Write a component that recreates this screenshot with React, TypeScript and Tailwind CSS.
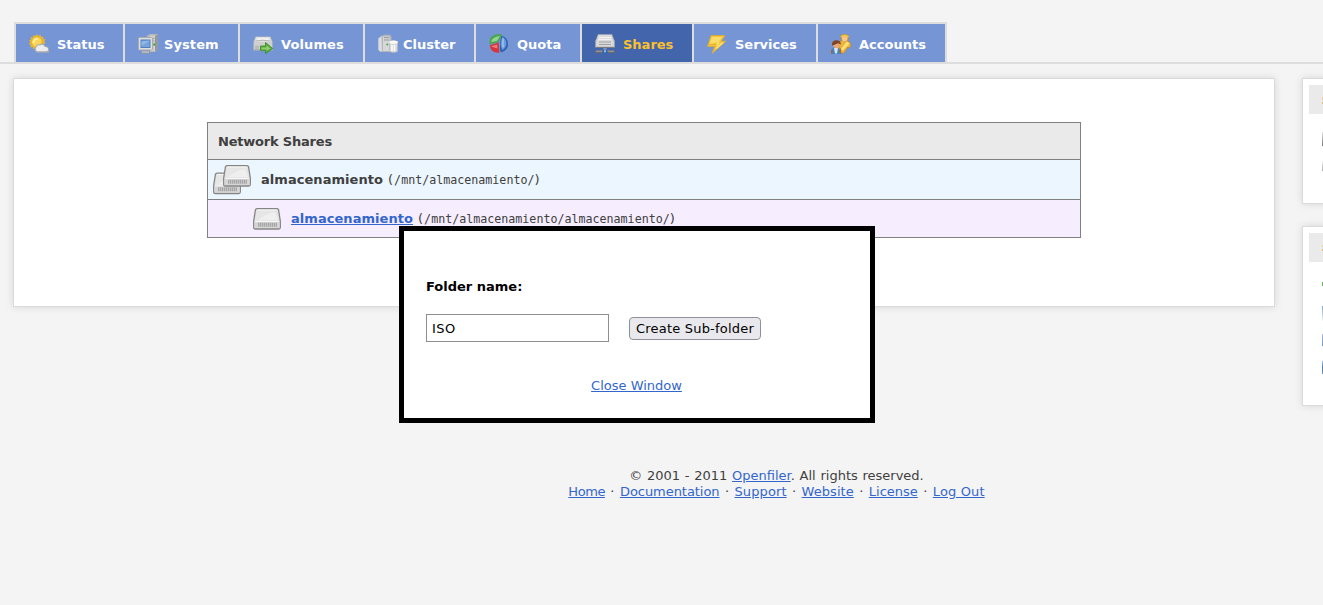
import type { ReactNode } from "react";

function StatusIcon() {
  return (
    <svg width="20" height="20" viewBox="0 0 20 20" className="shrink-0">
      <path d="M8 0l1.300 2L11.500.7l.5 2.300 2.600-.4-.6 2.300 2.500.6-1.400 2 1.500 1.800-2.400.8.5 2.500-2.600-.4-.6 2.300-2.200-1.200L8 16l-1.500-2-2.200 1.300-.5-2.400-2.500.4.6-2.400-2-.9 1.500-2L0 6.300l2.200-.8L1.500 3l2.500.4.5-2.500 2.200 1.200z" fill="#e8b72f" />
      <circle cx="7.800" cy="8" r="5.300" fill="#fbd65a" stroke="#eda91c" strokeWidth=".8" />
      <path d="M4.500 9a3.800 3.800 0 0 1 4.500-4" stroke="#fff0a0" strokeWidth="1.800" fill="none" />
      <path d="M8.500 18.700a3.400 3.400 0 0 1-1.700-6 2.800 2.800 0 0 1 3.400-2.200 3.800 3.800 0 0 1 6.200 1.800 3.200 3.200 0 0 1 3.600 3v3.400z" fill="#a7a9ac" />
      <path d="M8 17.200a2.600 2.600 0 0 1-.2-4.400q1-2 3-1.200 3.600-2.200 5 1.500 3.200-.2 3.400 2.600-.3 1.500-2.200 1.500z" fill="#ececed" />
    </svg>
  );
}

function SystemIcon() {
  return (
    <svg width="20" height="20" viewBox="0 0 20 20" className="shrink-0">
      <path d="M9 1.500 12 0h7.500v16L17 18h-5V4H9z" fill="#b5b7ba" />
      <path d="M12 1.500h5V17h-5z" fill="#cfd0d2" />
      <path d="M17 2 19.700.5V16L17 17.500z" fill="#96999c" />
      <path d="M12.500 4.500h4M13.500 7h3" stroke="#9b9da0" />
      <circle cx="16.300" cy="10.500" r="1.200" fill="#48a640" />
      <rect x=".5" y="3.500" width="14" height="12.500" rx="1" fill="#dedede" stroke="#a9abad" />
      <rect x="3" y="6" width="9" height="7.500" fill="#76a3dc" stroke="#4f7fbe" />
      <path d="M3.500 12V7.500l8-1z" fill="#91b8e7" />
      <path d="M5 16.500h5v1h2v2H3v-1.500l2-.5z" fill="#95989a" />
      <path d="M4 18h7" stroke="#d5d6d7" />
    </svg>
  );
}

function VolumesIcon() {
  return (
    <svg width="20" height="20" viewBox="0 0 20 20" className="shrink-0">
      <path d="M2.500 2.500h15L19.700 8v8.500H.3V8z" fill="#b4b7b6" />
      <path d="M3 3h14l2 5.500H1z" fill="#dfe0df" />
      <path d="M4.500 4h11l.8 2H3.500z" fill="#f0f0f0" />
      <path d="M2.500 7q7-1.500 15 0" stroke="#b5b6b5" fill="none" />
      <path d="M1 8.500h18V15H1z" fill="#cfd0cf" />
      <path d="M3 11.500v4M5 11.500v4" stroke="#a4a6a4" />
      <path d="M7.500 12h5V8.500l7.200 6-7.200 5v-3.200h-5z" fill="#5caf38" stroke="#3b8b2a" strokeWidth=".9" />
      <path d="M8.500 13.500h5v-2L17.500 14.500l-4 2.300v-1.300h-5z" fill="#93cc70" />
    </svg>
  );
}

function ClusterIcon() {
  return (
    <svg width="20" height="20" viewBox="0 0 20 20" className="shrink-0">
      <path d="M.3 4.500 4 1.500v16l-1 .5-2.700-2z" fill="#dadcdd" />
      <path d="M3.500 2 6 .7h6L13.500 3v13.500l-2 1.500H4z" fill="#b4b7b9" />
      <path d="M5 2.500h6.500V17H5z" fill="#d6d7d8" />
      <path d="M6 3.700h5M6 6h5" stroke="#94979a" />
      <circle cx="9.300" cy="10.500" r="1" fill="#4ba746" />
      <path d="M11.500 7.500q4-1.500 8 0V17.500q-4 2-8 0z" fill="#d6d8d9" stroke="#b8babc" strokeWidth=".7" />
      <ellipse cx="15.500" cy="8.200" rx="4.200" ry="1.600" fill="#fafafa" />
      <path d="M14 11v6M16.500 11v6" stroke="#fff" strokeWidth="1.500" />
    </svg>
  );
}

function QuotaIcon() {
  return (
    <svg width="20" height="20" viewBox="0 0 20 20" className="shrink-0">
      <path d="M12 1.800q7 1.200 7 8.500 0 5.500-6 8l-2-1V9z" fill="#2e63b1" />
      <path d="M13 3q4.500 1.800 4.300 7-.2 4-4.300 6l-1.500-6z" fill="#6c9bdc" />
      <path d="M14 4.500v9" stroke="#a0c3ee" strokeWidth="1.500" />
      <path d="M.5 9Q0 4.500 3.500 2 8-.8 13 .5L9.500 8 1 10.500z" fill="#4ba74e" />
      <path d="M2 8q1-5 9-6L8 7z" fill="#95d490" />
      <path d="m.7 11.500 9-3.300.7 10.500q-8 1-9.700-7.200z" fill="#d8343b" />
      <path d="m2 12.500 6-2 .5 4z" fill="#f07b78" />
    </svg>
  );
}

function SharesIcon() {
  return (
    <svg width="20" height="20" viewBox="0 0 20 20" className="shrink-0">
      <path d="M3 .3h14L19.700 7v6.500H.3V7z" fill="#b9babb" />
      <path d="M3.500 1h13l1.700 6H1.800z" fill="#dcdcdc" />
      <path d="M1.200 6.500h17.600v6H1.200z" fill="#d9d9d9" />
      <path d="M3.500 5.500h13M4 3.500h12" stroke="#f2f2f2" />
      <path d="M4 8h12M4 10.500h12" stroke="#a0a1a3" />
      <path d="M1 13.500h18" stroke="#777b80" />
      <path d="M10 14v3" stroke="#8299b8" strokeWidth="3" />
      <path d="M.3 17.700h19.400" stroke="#696d70" strokeWidth="3" />
      <path d="M1 17.200h18" stroke="#a3a4a4" />
      <rect x="7.500" y="15.700" width="5" height="4" rx="1.500" fill="#2d65b6" />
      <path d="M9 17.300h2" stroke="#8fc1f4" strokeWidth="2" />
    </svg>
  );
}

function ServicesIcon() {
  return (
    <svg width="20" height="20" viewBox="0 0 20 20" className="shrink-0">
      <path d="M4 1.500h14L14 7.200h5L5 19.500l2.800-7H.5z" fill="#f2c83b" stroke="#d9a83a" strokeWidth=".9" />
      <path d="M5 3h10l-3.500 5-9 2z" fill="#f9dc6a" />
      <path d="M12 7.500 9.500 12M16 8.500l-7 6" stroke="#fce37b" strokeWidth="1.500" />
      <path d="M2 10.500h7l-2 5" stroke="#e9b329" fill="none" />
    </svg>
  );
}

function AccountsIcon() {
  return (
    <svg width="20" height="20" viewBox="0 0 20 20" className="shrink-0">
      <path d="M8 9.500q1-3 3.500-3.500L17 7q3 1 3 5l-2 2-1-1-4 6H8z" fill="#eab53c" stroke="#b98437" strokeWidth=".7" />
      <path d="m9.500 15.500 6.500-8 2.500 2-6.500 7z" fill="#ffdf72" />
      <path d="M9.500 1.500q4-3 8 0V6L14 8l-4-2.500z" fill="#c48a2c" />
      <ellipse cx="13.700" cy="4.500" rx="2.800" ry="3" fill="#f7c889" />
      <path d="M10 3q3.500-3 7.500 0" stroke="#f0c53c" strokeWidth="2" fill="none" />
      <path d="M0 20 1.500 14q4-3 7 1l2 5z" fill="#4384c6" />
      <path d="M3 14h4l-1 5.500H4z" fill="#d8e7f4" />
      <circle cx="5.500" cy="11" r="3.300" fill="#e6a877" />
      <path d="M1 11.500Q.5 6.500 5 6.300t5 4.200L7 9.300l-4 1.700z" fill="#854421" />
      <path d="M.7 15.500v4M9.300 14.500v5" stroke="#a86538" strokeWidth="1.500" />
    </svg>
  );
}

function Drive() {
  return (
    <g>
      <path d="M4 .7h20q1.300 0 1.600 1.300L27.300 13v6.500q0 1.500-1.500 1.500H2.200Q.7 21 .7 19.500V13L2.400 2Q2.700.7 4 .7z" fill="#e2e2e2" stroke="#858583" strokeWidth="1.300" />
      <path d="M4 2h20l2 11.500H2z" fill="#e6e6e6" />
      <path d="M4.500 2h19M1.800 13.500h24.400" stroke="#f6f6f6" />
      <path d="M5 12q7-6 17-8l3 8z" fill="#efefef" />
      <path d="M1.500 14h25v6h-25z" fill="#d6d6d6" />
      <path d="M5 16.700h19" stroke="#a6a6a6" strokeWidth="4" strokeDasharray="1 1" />
      <path d="M5 16.700h19" stroke="#c2c2c2" strokeWidth="4" strokeDasharray="1 1" strokeDashoffset="1" />
    </g>
  );
}

const tabs: { label: string; icon: ReactNode; box: string; text: string }[] = [
  { label: "Status", icon: <StatusIcon />, box: "w-[109px] bg-[#7595d5]", text: "ml-[8px] text-white" },
  { label: "System", icon: <SystemIcon />, box: "w-[115px] bg-[#7595d5]", text: "ml-[6px] tracking-[0.1px] text-white" },
  { label: "Volumes", icon: <VolumesIcon />, box: "w-[125px] bg-[#7595d5]", text: "ml-[8px] tracking-[0.1px] text-white" },
  { label: "Cluster", icon: <ClusterIcon />, box: "w-[111px] bg-[#7595d5]", text: "ml-[5px] text-white" },
  { label: "Quota", icon: <QuotaIcon />, box: "w-[106px] bg-[#7595d5]", text: "ml-[8px] text-white" },
  { label: "Shares", icon: <SharesIcon />, box: "w-[112px] bg-[#4365ac]", text: "ml-[8px] text-[#fbc02d]" },
  { label: "Services", icon: <ServicesIcon />, box: "w-[124px] bg-[#7595d5]", text: "ml-[8px] text-white" },
  { label: "Accounts", icon: <AccountsIcon />, box: "w-[129px] bg-[#7595d5]", text: "ml-[8px] text-white" },
];

const link = "text-[#3366cc] underline";
const footerLinks = [
  { name: "Home", spacing: "tracking-[-0.450px]" },
  { name: "Documentation", spacing: "tracking-[-0.050px]" },
  { name: "Support", spacing: "tracking-[0.100px]" },
  { name: "Website", spacing: "tracking-[0.050px]" },
  { name: "License", spacing: "" },
  { name: "Log Out", spacing: "tracking-[0.130px]" },
];
const panel = "border border-[#dadada] bg-white shadow-[0_0_8px_rgba(0,0,0,0.12)]";
const mono = "font-['DejaVu_Sans_Mono',monospace] text-[11.660px]";

export default function App() {
  return (
    <div className="relative h-[605px] w-[1323px] overflow-hidden bg-[#f4f4f4] font-['DejaVu_Sans',sans-serif] text-[13px] leading-4 text-[#404040]">
      <nav className="flex h-[64px] border-b-2 border-[#dddddd] pt-[22px] pl-[14px]">
        <div className="flex h-[40px] border-t-2 border-l-2 border-[#dddddd]">
          {tabs.map((t) => (
            <a key={t.label} className={`flex items-center border-r-2 border-[#dddddd] pt-[2px] pl-[13px] font-bold whitespace-nowrap ${t.box}`}>
              {t.icon}
              <span className={`pt-[2px] ${t.text}`}>{t.label}</span>
            </a>
          ))}
        </div>
      </nav>

      <div className="flex items-start gap-[27px] pt-[14px] pl-[13px]">
        <main className={`h-[229px] w-[1262px] shrink-0 pt-[43px] pl-[193px] ${panel}`}>
          <div className="h-[116px] w-[874px] border border-[#808080]">
            <div className="flex h-[37px] items-center border-b border-[#808080] bg-[#eaeaea] pt-[2px] pl-[10px] font-bold tracking-[-0.200px]">Network Shares</div>
            <div className="flex h-[40px] items-center border-b border-[#808080] bg-[#ecf6ff] pl-[5px] whitespace-pre">
              <svg width="38" height="30" viewBox="0 0 38 30" className="shrink-0">
                <g transform="translate(0 7.500)"><Drive /></g>
                <g transform="translate(10 0)"><Drive /></g>
              </svg>
              <span className="ml-[10px] font-bold tracking-[0.050px]">almacenamiento</span>
              <span className="ml-[5px]">(<span className={`ml-px ${mono}`}>/mnt/almacenamiento/</span>)</span>
            </div>
            <div className="flex h-[37px] items-center bg-[#f6edff] pl-[45px] whitespace-pre">
              <svg width="28" height="22" viewBox="0 0 28 22" className="shrink-0"><Drive /></svg>
              <a className={`ml-[10px] font-bold tracking-[0.050px] ${link}`}>almacenamiento</a>
              <span className="ml-[5px]">(<span className={`ml-px ${mono}`}>/mnt/almacenamiento/almacenamiento/</span>)</span>
            </div>
          </div>
        </main>
        <aside className="flex shrink-0 flex-col gap-[22px]">
          <section className={`h-[126px] w-[200px] p-[6px] ${panel}`}>
            <div className="h-[29px] bg-[#eaeaea] pt-[12px] pl-[13px]">
              <div className="h-[3px] w-px bg-[#e7d3a0]" />
              <div className="mt-[2px] h-[2px] w-px bg-[#dfbd79]" />
            </div>
            <div className="mt-[18px] ml-[13px] h-[14px] w-px bg-linear-to-b from-[#e8e8e8] to-[#777777]" />
            <div className="mt-[15px] ml-[13px] h-[10px] w-px bg-linear-to-b from-[#f4f4f4] to-[#aaaaaa]" />
          </section>
          <section className={`h-[180px] w-[200px] p-[6px] ${panel}`}>
            <div className="h-[29px] bg-[#eaeaea] pt-[12px] pl-[13px]">
              <div className="h-[2px] w-px bg-[#e7d3a0]" />
              <div className="mt-[2px] h-[2px] w-px bg-[#dfbd79]" />
            </div>
            <div className="mt-[20px] ml-[13px] h-[4px] w-px bg-[#70ad68]" />
            <div className="mt-[20px] ml-[13px] h-[15px] w-px bg-linear-to-b from-[#88a5c3] to-[#f0f4f8]" />
            <div className="mt-[13px] ml-[13px] h-[12px] w-px bg-linear-to-b from-[#b0c0e0] to-[#7090c0]" />
            <div className="mt-[15px] ml-[13px] h-[13px] w-px bg-linear-to-b from-[#a8c4dc] via-[#4a80b4] to-[#7894b0]" />
          </section>
        </aside>
      </div>

      <footer className="mt-[62px] flex flex-col items-center pl-[230px] whitespace-pre">
        <div className="[word-spacing:0.600px]">© 2001 - 2011 <a className={link}>Openfiler</a>. All rights reserved.</div>
        <div className="flex">
          {footerLinks.map(({ name, spacing }, i) => (
            <span key={name} className="flex">
              {i > 0 && <span className="w-[15px] text-center">·</span>}
              <a className={`${link} ${spacing}`}>{name}</a>
            </span>
          ))}
        </div>
      </footer>

      <div className="absolute top-[226px] left-[399px] h-[197px] w-[476px] border-[5px] border-black bg-white pt-[48px] text-black">
        <div className="pl-[22px] font-bold">Folder name:</div>
        <div className="mt-[19px] flex items-center gap-[20px] pl-[22px]">
          <input readOnly value="ISO" className="h-[28px] w-[183px] border border-[#8f8f8f] bg-white px-[5px] tracking-[0.400px] outline-none" />
          <button className="mt-px h-[23px] w-[132px] rounded-[4px] border border-[#8f8f9d] bg-[#e9e9ed] leading-[20px] tracking-[0.200px] whitespace-nowrap">Create Sub-folder</button>
        </div>
        <div className="mt-[36px] pr-px text-center"><a className={link}>Close Window</a></div>
      </div>
    </div>
  );
}
